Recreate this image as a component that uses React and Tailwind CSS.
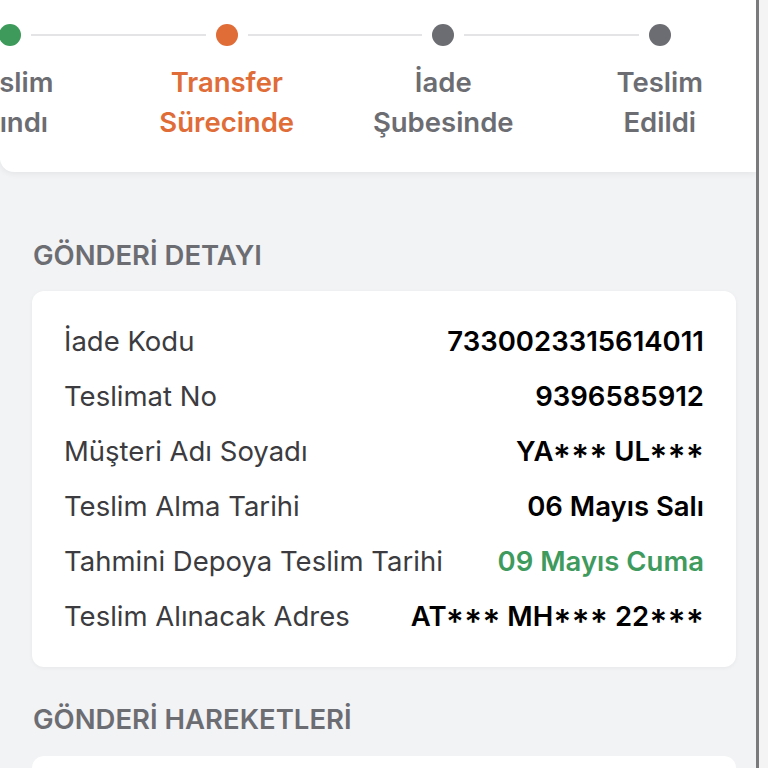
const steps = [
  { label: ["Teslim", "Alındı"], dot: "bg-[#3d9a5b]", text: "text-[#6c6d72]" },
  { label: ["Transfer", "Sürecinde"], dot: "bg-[#e06c38]", text: "text-[#e06c38]" },
  { label: ["İade", "Şubesinde"], dot: "bg-[#6c6d72]", text: "text-[#6c6d72]" },
  { label: ["Teslim", "Edildi"], dot: "bg-[#6c6d72]", text: "text-[#6c6d72]" },
];

const details = [
  { label: "İade Kodu", value: "7330023315614011" },
  { label: "Teslimat No", value: "9396585912" },
  { label: "Müşteri Adı Soyadı", value: "YA*** UL***" },
  { label: "Teslim Alma Tarihi", value: "06 Mayıs Salı" },
  { label: "Tahmini Depoya Teslim Tarihi", value: "09 Mayıs Cuma", green: true },
  { label: "Teslim Alınacak Adres", value: "AT*** MH*** 22***" },
];

const App = () => {
  return (
    <div
      className="flex h-[768px] w-[768px] overflow-hidden bg-[#f2f3f5]"
      style={{ fontFamily: "Inter, 'Noto Sans', sans-serif" }}
    >
      <div className="flex w-[756px] shrink-0 flex-col">
        {/* Progress steps */}
        <div className="h-[172px] shrink-0 overflow-hidden rounded-bl-[14px] bg-white shadow-[0_2px_6px_rgba(0,0,0,0.06)]">
          <div className="ml-[-98px] flex w-[866px] pt-[24px]">
            {steps.map((s, i) => (
              <div key={i} className="flex flex-1 flex-col items-center">
                <div className="flex w-full items-center">
                  <div className={`mr-[10px] h-[2px] flex-1 ${i === 0 ? "" : "bg-[#e4e4e6]"}`} />
                  <div className={`h-[22px] w-[22px] rounded-full ${s.dot}`} />
                  <div className={`ml-[10px] h-[2px] flex-1 ${i === steps.length - 1 ? "" : "bg-[#e4e4e6]"}`} />
                </div>
                <div className={`mt-[16px] text-center text-[27.5px] font-semibold leading-[40px] ${s.text}`}>
                  <div>{s.label[0]}</div>
                  <div>{s.label[1]}</div>
                </div>
              </div>
            ))}
          </div>
        </div>

        {/* Shipment details */}
        <h2 className="ml-[33px] mt-[67px] text-[27.5px] font-semibold leading-[32px] text-[#6c6d72]">
          GÖNDERİ DETAYI
        </h2>
        <div className="ml-[32px] mr-[20px] mt-[20px] rounded-[12px] bg-white px-[32px] py-[23px] shadow-[0_1px_4px_rgba(0,0,0,0.05)]">
          {details.map((d) => (
            <div key={d.label} className="flex h-[55px] items-center justify-between text-[27.5px]">
              <span className="text-[#3c3c40]">{d.label}</span>
              {/* 'case' centres the masking asterisks on the caps */}
              <span
                className={`font-semibold [font-feature-settings:'case'] ${d.green ? "text-[#3f9a5e]" : "text-black"}`}
              >
                {d.value}
              </span>
            </div>
          ))}
        </div>

        {/* Shipment movements */}
        <h2 className="ml-[33px] mt-[36px] text-[27.5px] font-semibold leading-[32px] text-[#6c6d72]">
          GÖNDERİ HAREKETLERİ
        </h2>
        <div className="ml-[32px] mr-[20px] mt-[21px] h-[120px] shrink-0 rounded-[12px] bg-white" />
      </div>
      <div className="w-[3px] shrink-0 bg-[#7a7a7c]" />
      <div className="flex-1 bg-[#f4f4f5]" />
    </div>
  );
};

export default App;
